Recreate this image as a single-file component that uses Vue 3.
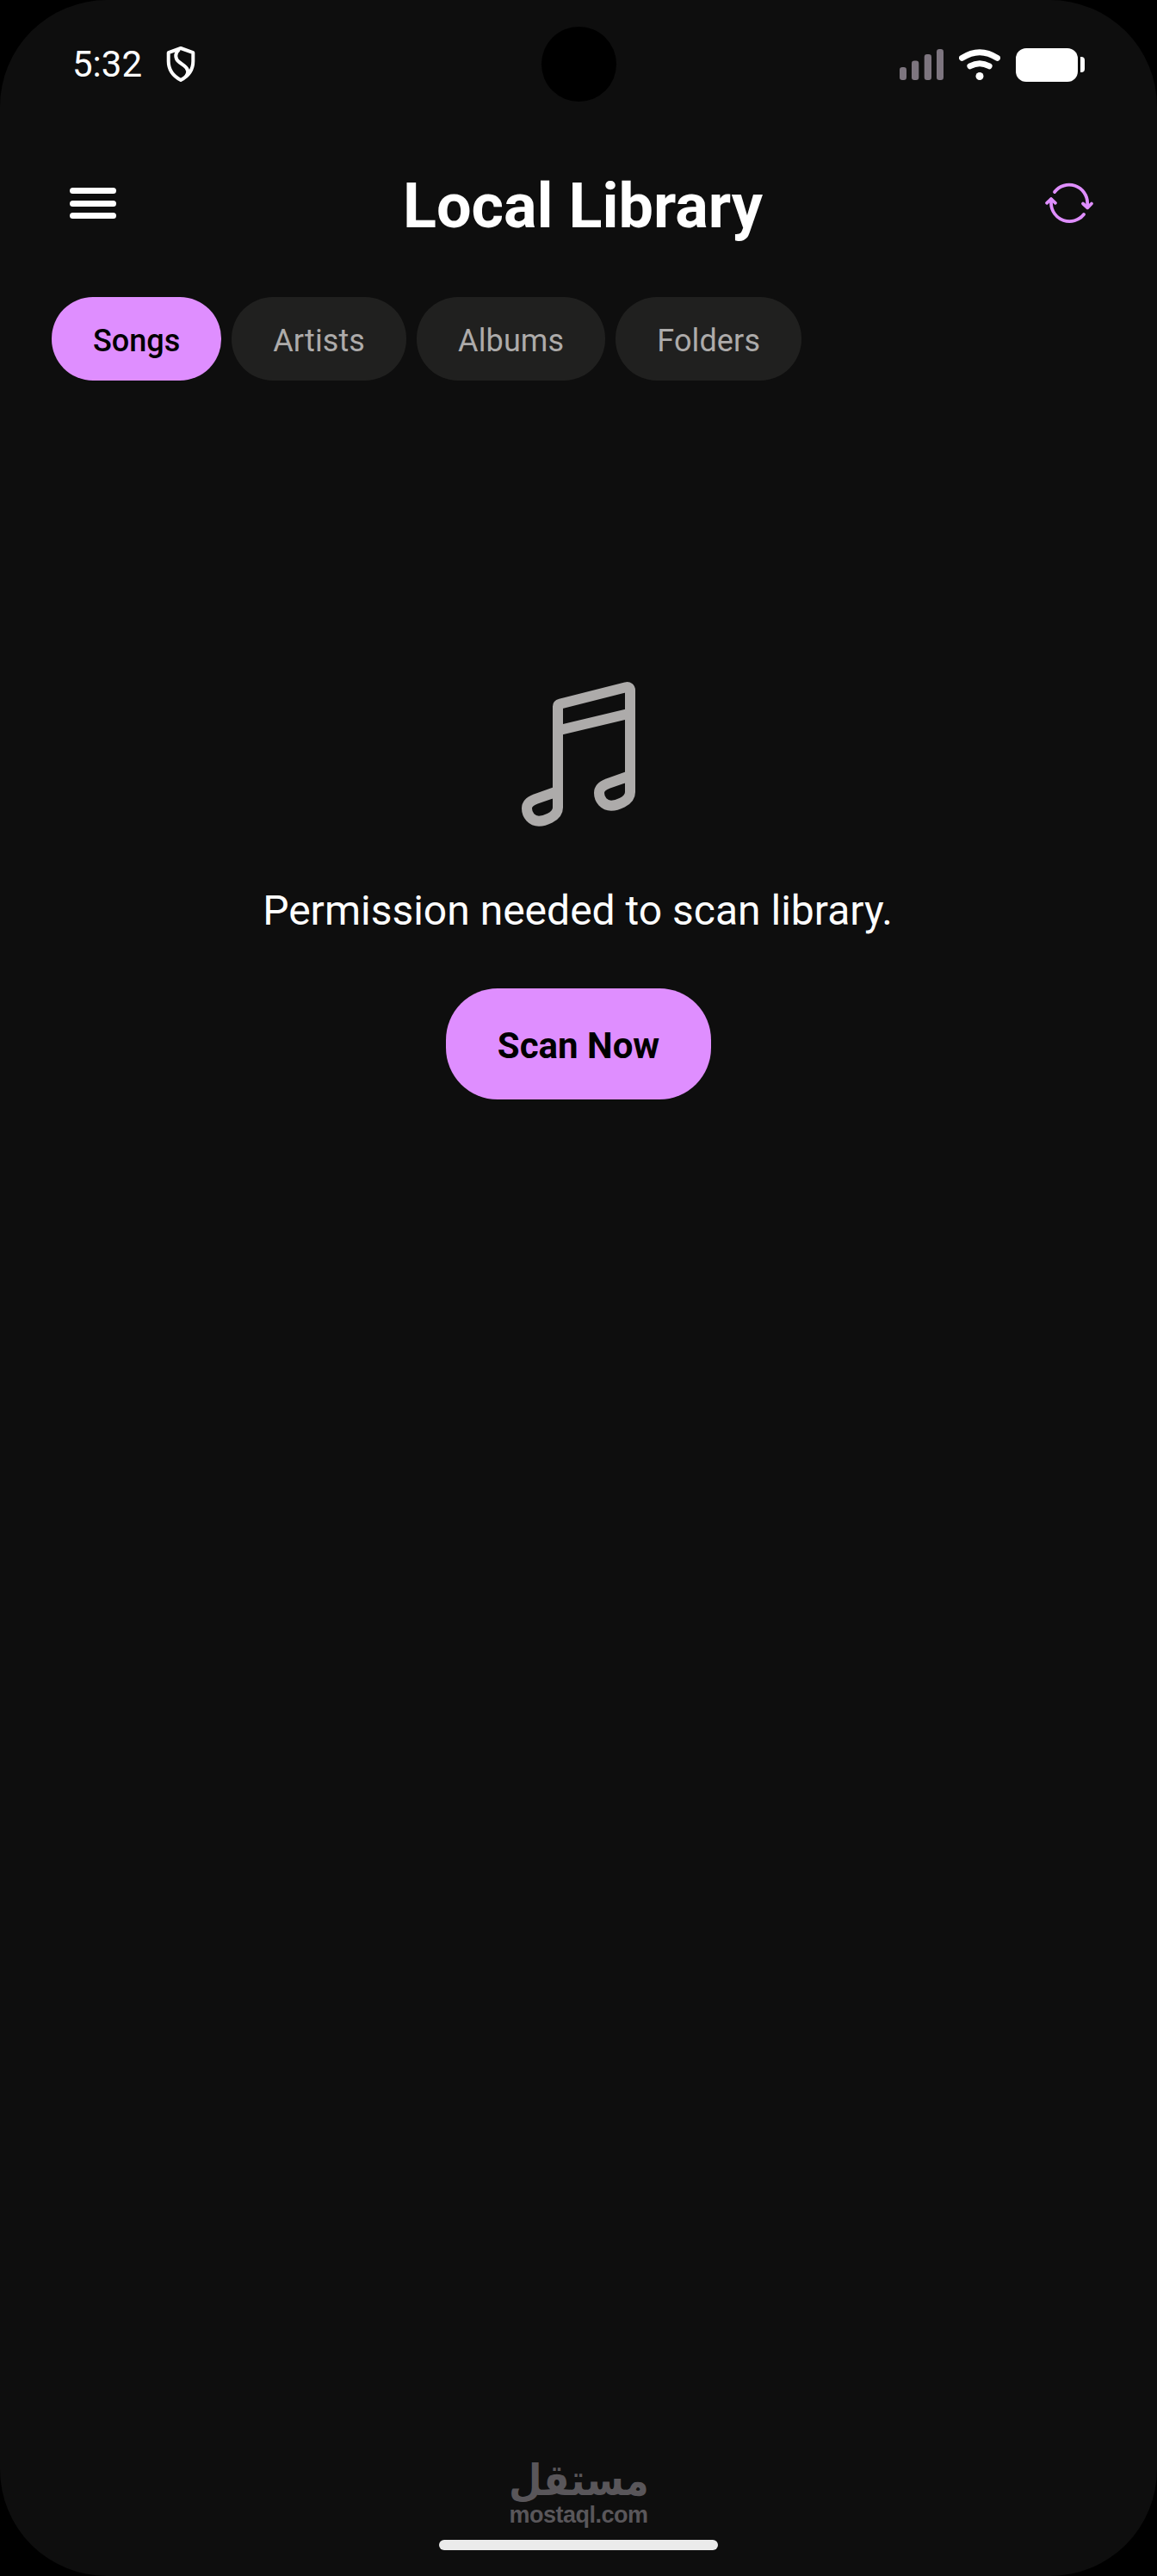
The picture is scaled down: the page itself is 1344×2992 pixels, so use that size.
<script setup>
import { ref } from "vue";

// Local state
const time = ref("5:32");
const tabs = ref(["Songs", "Artists", "Albums", "Folders"]);
const activeTab = ref("Songs");

// Methods
const selectTab = (tab) => {
  activeTab.value = tab;
};
</script>

<template>
  <div class="screen">
    <div class="camera"></div>

    <!-- Status bar -->
    <div class="status-bar">
      <div class="status-left">
        <span class="time">{{ time }}</span>
        <svg class="shield" width="34" height="44" viewBox="0 0 34 44">
          <path d="M17 3 L31.3 8.2 V18 C31.3 28.5 25.5 35.5 17 40 C8.5 35.5 2.7 28.5 2.7 18 V8.2 Z" />
          <path d="M15 4.5 C10 9 10 15 15 19 L21 23.3 C26 27 26.5 31 23 36" />
        </svg>
      </div>
      <div class="status-right">
        <svg class="signal" width="51" height="36" viewBox="0 0 51 36">
          <rect x="0" y="21" width="8" height="15" rx="3.2" />
          <rect x="14" y="13.5" width="8.3" height="22.5" rx="3.2" />
          <rect x="28.7" y="6" width="8.3" height="30" rx="3.2" />
          <rect x="43" y="0" width="8" height="36" rx="3.2" />
        </svg>
        <svg class="wifi" width="48" height="36" viewBox="0 0 48 36">
          <path d="M3.5 10.4 Q24 -3 44.5 10.4" />
          <path d="M12.9 19.8 Q24 13.6 35.1 19.8" />
          <circle cx="24" cy="31.5" r="4.5" />
        </svg>
        <div class="battery">
          <div class="battery-body"></div>
          <div class="battery-cap"></div>
        </div>
      </div>
    </div>

    <!-- Header -->
    <header class="header">
      <button class="menu-button" aria-label="Menu">
        <span></span>
        <span></span>
        <span></span>
      </button>
      <h1 class="title">Local Library</h1>
      <button class="refresh-button" aria-label="Refresh">
        <svg width="60" height="50" viewBox="22 21.5 60 50">
          <path d="M35 33.5 A21.3 21.3 0 0 1 73.2 46.5 V51" />
          <path d="M68 47 L73.2 51.8 L78 47" />
          <path d="M69 59.5 A21.3 21.3 0 0 1 31 46.5 V42" />
          <path d="M26 46.3 L31 41.5 L36 46.3" />
        </svg>
      </button>
    </header>

    <!-- Tabs -->
    <nav class="tabs">
      <button
        v-for="tab in tabs"
        :key="tab"
        class="tab"
        :class="{ active: tab === activeTab }"
        @click="selectTab(tab)">
        {{ tab }}
      </button>
    </nav>

    <!-- Empty state -->
    <main class="empty-state">
      <svg class="note" width="134" height="170" viewBox="15 21 134 170">
        <path d="M58 150 V50.5 Q58 48.3 61 47.5 L137 28.3 Q142 27.3 142 32 V132" />
        <path d="M58 78.5 L142 58.5" />
        <path d="M58 149 L32 158.2 C26 160.5 22 163.5 22 169 C22 177 28 183.7 36 183.7 C41 183.7 58 179.5 58 168 Z" />
        <path d="M142 131 L116 140.2 C110 142.5 106 145.5 106 151 C106 159 112 165.7 120 165.7 C125 165.7 142 161.5 142 150 Z" />
      </svg>
      <p class="message">Permission needed to scan library.</p>
      <button class="scan-button">Scan Now</button>
    </main>

    <footer class="footer">
      <div class="watermark">
        <span class="watermark-name" lang="ar" dir="rtl">مستقل</span>
        <span class="watermark-url">mostaql.com</span>
      </div>
      <div class="home-indicator"></div>
    </footer>
  </div>
</template>

<style>
body {
  margin: 0;
  background-color: #000;
}
</style>

<style scoped>
.screen {
  position: relative;
  display: flex;
  flex-direction: column;
  box-sizing: border-box;
  width: 1344px;
  height: 2992px;
  background-color: #0e0e0e;
  border-radius: 124px;
  overflow: hidden;
  color: #fff;
  font-family: Roboto, sans-serif;
}

button {
  border: none;
  padding: 0;
  background: none;
  font-family: inherit;
  cursor: pointer;
}

.camera {
  position: absolute;
  top: 31px;
  left: 629px;
  width: 87px;
  height: 87px;
  border-radius: 50%;
  background-color: #000;
}

.status-bar {
  display: flex;
  justify-content: space-between;
  align-items: center;
  height: 150px;
  padding: 0 84px 0 84px;
  box-sizing: border-box;
}

.status-left,
.status-right,
.battery {
  display: flex;
  align-items: center;
}

.status-left {
  gap: 28px;
}

.time {
  font-size: 42px;
  line-height: 50px;
}

.shield {
  fill: none;
  stroke: #fff;
  stroke-width: 4;
  stroke-linejoin: round;
}

.signal {
  fill: #7d757f;
  margin-right: 18px;
}

.wifi {
  margin-right: 18px;
}

.wifi path {
  fill: none;
  stroke: #fff;
  stroke-width: 7;
  stroke-linecap: round;
}

.wifi circle {
  fill: #fff;
}

.battery {
  gap: 3px;
}

.battery-body {
  width: 72px;
  height: 39px;
  border-radius: 12px;
  background-color: #fff;
}

.battery-cap {
  width: 5px;
  height: 18px;
  border-radius: 0 4px 4px 0;
  background-color: #fff;
}

.header {
  display: flex;
  justify-content: space-between;
  align-items: center;
  height: 172px;
  padding: 0 72px 0 81px;
}

.menu-button {
  display: flex;
  flex-direction: column;
  gap: 7.5px;
  width: 54px;
}

.menu-button span {
  height: 7px;
  border-radius: 4px;
  background-color: #fff;
}

.title {
  margin: 8px 0 0 7px;
  font-size: 72px;
  line-height: 84px;
  font-weight: 700;
}

.refresh-button svg {
  display: block;
  fill: none;
  stroke: #df8eff;
  stroke-width: 3.8;
  stroke-linecap: round;
  stroke-linejoin: round;
}

.tabs {
  display: flex;
  gap: 12px;
  margin-top: 23px;
  padding: 0 60px;
}

.tab {
  height: 97px;
  padding: 4px 48px 0;
  border-radius: 48px;
  background-color: #20201f;
  color: #adabaa;
  font-size: 36px;
  letter-spacing: 0.12px;
}

.tab.active {
  background-color: #df8eff;
  color: #000;
  font-weight: 500;
  letter-spacing: 0;
}

.empty-state {
  display: flex;
  flex: 1;
  flex-direction: column;
  align-items: center;
  padding-top: 349px;
}

.note {
  fill: none;
  stroke: #adabaa;
  stroke-width: 12;
  stroke-linejoin: round;
}

.message {
  margin: 68px 0 62px;
  padding-right: 2px;
  font-size: 48px;
  line-height: 57px;
}

.scan-button {
  height: 129px;
  padding: 4px 60px 0;
  border-radius: 60px;
  background-color: #df8eff;
  color: #000;
  font-size: 42px;
  font-weight: 700;
}

.footer {
  display: flex;
  flex-direction: column;
  align-items: center;
  padding-bottom: 30px;
}

.watermark {
  display: flex;
  flex-direction: column;
  align-items: center;
  margin-bottom: 14px;
  color: #59565a;
}

.watermark-name {
  font-family: "DejaVu Sans", sans-serif;
  font-size: 50px;
  line-height: 50px;
  font-weight: 700;
  transform: scaleX(0.89);
}

.watermark-url {
  font-family: "Liberation Sans", sans-serif;
  font-size: 27px;
  line-height: 30px;
  font-weight: 700;
  letter-spacing: -0.5px;
}

.home-indicator {
  width: 324px;
  height: 12px;
  border-radius: 6px;
  background-color: #ebebeb;
}
</style>
